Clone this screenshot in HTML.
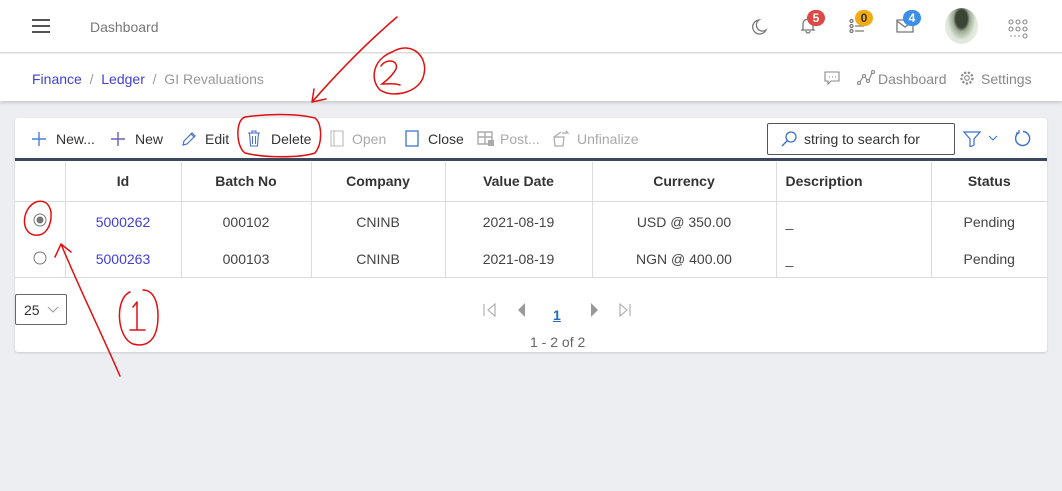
<!DOCTYPE html>
<html><head><meta charset="utf-8"><style>
*{box-sizing:border-box;margin:0;padding:0}
body{width:1062px;height:491px;background:#eceef1;font-family:"Liberation Sans",sans-serif;position:relative;overflow:hidden;color:#333}
.abs{position:absolute}
.hdr{left:0;top:0;width:1062px;height:53px;background:#fff;border-bottom:1px solid #dcdcdc}
.bc{left:0;top:54px;width:1062px;height:47px;background:#fff;box-shadow:0 2px 3px rgba(0,0,0,.15)}
.card{left:15px;top:118px;width:1032px;height:234px;background:#fff;border-radius:3px;box-shadow:0 1px 2px rgba(0,0,0,.15)}
.t{font-size:14px;white-space:nowrap}
.badge{position:absolute;height:16px;min-width:18px;border-radius:8px;color:#fff;font-size:12px;font-weight:bold;text-align:center;line-height:16px;padding:0 4px}
table{position:absolute;left:15px;top:162px;border-collapse:collapse;font-size:14px}
td,th{border-right:1px solid #dcdcdc;text-align:center;color:#444}
th{height:39px;border-bottom:1px solid #dcdcdc;color:#333}
td:last-child,th:last-child{border-right:none}
tr.r td{height:38px;padding-top:3px}
.lnk{color:#3f3fd8}
</style></head><body>
<div class="abs hdr"></div>
<svg class="abs" style="left:31px;top:18px" width="20" height="16"><path d="M1 2h18M1 8h18M1 14h18" stroke="#555" stroke-width="2"/></svg>
<div class="abs t" style="left:90px;top:19px;color:#777">Dashboard</div>
<svg class="abs" style="left:750px;top:18px" width="18" height="18"><path d="M9 2a7 7 0 1 0 7 10a6 6 0 0 1-7-10z" fill="none" stroke="#777" stroke-width="1.3"/></svg>
<svg class="abs" style="left:800px;top:16px" width="16" height="18"><path d="M3 13V8a5 5 0 0 1 10 0v5l1 1H2zM6 15a2 2 0 0 0 4 0" fill="none" stroke="#777" stroke-width="1.3"/></svg>
<div class="badge" style="left:807px;top:10px;background:#e04848">5</div>
<svg class="abs" style="left:849px;top:18px" width="16" height="16"><g fill="none" stroke="#777" stroke-width="1.3"><circle cx="2.5" cy="3" r="1.5"/><circle cx="2.5" cy="8" r="1.5"/><circle cx="2.5" cy="13" r="1.5"/><path d="M6 8h9M6 13h9"/></g></svg>
<div class="badge" style="left:855px;top:10px;background:#f2ac13;color:#333">0</div>
<svg class="abs" style="left:896px;top:19px" width="18" height="14"><path d="M1 1h16v12H1zM1 2l8 6 8-6" fill="none" stroke="#777" stroke-width="1.3"/></svg>
<div class="badge" style="left:903px;top:10px;background:#3b8fe8">4</div>
<div class="abs" style="left:945px;top:8px;width:33px;height:36px;border-radius:50%;background:radial-gradient(ellipse at 50% 30%,#3a4536 0 25%,#9aa893 35%,#dfe7da 60%,#eef2ec 100%)"></div>
<svg class="abs" style="left:1008px;top:19px" width="20" height="20"><g fill="none" stroke="#888" stroke-width="1.1"><circle cx="3" cy="3" r="2"/><circle cx="10" cy="3" r="2"/><circle cx="17" cy="3" r="2"/><circle cx="3" cy="10" r="2"/><circle cx="10" cy="10" r="2"/><circle cx="17" cy="10" r="2"/><circle cx="17" cy="17" r="2"/></g><g fill="#888"><circle cx="3" cy="17" r=".8"/><circle cx="7" cy="17" r=".8"/><circle cx="11" cy="17" r=".8"/></g></svg>

<div class="abs bc"></div>
<div class="abs t" style="left:32px;top:71px;color:#999"><span class="lnk">Finance</span> &nbsp;/&nbsp; <span class="lnk">Ledger</span> &nbsp;/&nbsp; GI Revaluations</div>
<svg class="abs" style="left:824px;top:70px" width="16" height="16"><path d="M1 2h14v9H7l-3 3v-3H1z" fill="none" stroke="#888" stroke-width="1.1"/><path d="M5 7h1M8 7h1M11 7h1" stroke="#888"/></svg>
<svg class="abs" style="left:857px;top:70px" width="18" height="16"><g fill="none" stroke="#888" stroke-width="1.1"><circle cx="2" cy="13" r="1.5"/><circle cx="7" cy="6" r="1.5"/><circle cx="11" cy="11" r="1.5"/><circle cx="16" cy="2" r="1.5"/><path d="M3 12l3-5M8 7l2 3M12 10l3-7"/></g></svg>
<div class="abs t" style="left:878px;top:71px;color:#888">Dashboard</div>
<svg class="abs" style="left:959px;top:70px" width="16" height="16"><circle cx="8" cy="8" r="5.5" fill="none" stroke="#888" stroke-width="2.2" stroke-dasharray="2.2 1.6"/><circle cx="8" cy="8" r="2.3" fill="none" stroke="#888" stroke-width="1.1"/></svg>
<div class="abs t" style="left:981px;top:71px;color:#888">Settings</div>

<div class="abs card"></div>
<div class="abs" style="left:15px;top:158px;width:1032px;height:3px;background:#3b475c"></div>
<svg class="abs" style="left:31px;top:131px" width="16" height="16"><path d="M8 1v14M1 8h14" stroke="#4a7fd0" stroke-width="1.4"/></svg>
<div class="abs t" style="left:56px;top:131px">New...</div>
<svg class="abs" style="left:110px;top:131px" width="16" height="16"><path d="M8 1v14M1 8h14" stroke="#6b5fb5" stroke-width="1.4"/></svg>
<div class="abs t" style="left:135px;top:131px">New</div>
<svg class="abs" style="left:181px;top:131px" width="16" height="16"><path d="M2 14l1-4 8-8 3 3-8 8zM10 3l3 3" fill="none" stroke="#4a70c8" stroke-width="1.2"/></svg>
<div class="abs t" style="left:205px;top:131px">Edit</div>
<svg class="abs" style="left:247px;top:130px" width="14" height="17"><path d="M1 3h12M5 3V1h4v2M2.5 3l1 13h7l1-13M5.5 6v8M8.5 6v8" fill="none" stroke="#4a70c8" stroke-width="1.1"/></svg>
<div class="abs t" style="left:271px;top:131px">Delete</div>
<svg class="abs" style="left:330px;top:130px" width="14" height="17"><path d="M1 1h12v15H1zM4 1v15" fill="none" stroke="#bbb" stroke-width="1.1"/></svg>
<div class="abs t" style="left:352px;top:131px;color:#aaa">Open</div>
<svg class="abs" style="left:405px;top:130px" width="14" height="17"><path d="M1 1h12v15H1z" fill="none" stroke="#3a6fd0" stroke-width="1.3"/></svg>
<div class="abs t" style="left:428px;top:131px">Close</div>
<svg class="abs" style="left:477px;top:131px" width="18" height="16"><path d="M1 1h14v12H1zM1 6h14M8 1v12" fill="none" stroke="#aaa" stroke-width="1.4"/><rect x="11" y="9" width="6" height="6" fill="#aaa"/></svg>
<div class="abs t" style="left:500px;top:131px;color:#aaa">Post...</div>
<svg class="abs" style="left:552px;top:130px" width="20" height="17"><path d="M2 7h10l-1 9H3zM2 7l7-5M10 3h6l-2-2" fill="none" stroke="#aaa" stroke-width="1.2"/></svg>
<div class="abs t" style="left:577px;top:131px;color:#aaa">Unfinalize</div>
<div class="abs" style="left:767px;top:123px;width:188px;height:32px;border:1px solid #555;border-radius:2px"></div>
<svg class="abs" style="left:780px;top:130px" width="18" height="18"><circle cx="11" cy="7" r="5" fill="none" stroke="#3a6fd0" stroke-width="1.3"/><path d="M7.5 10.5L2 16" stroke="#3a6fd0" stroke-width="1.4"/></svg>
<div class="abs t" style="left:804px;top:131px;color:#333">string to search for</div>
<svg class="abs" style="left:963px;top:131px" width="40" height="16"><path d="M1 1h16l-6 7v6l-4 2V8z" fill="none" stroke="#3a6fd0" stroke-width="1.2"/><path d="M26 5l4 4 4-4" fill="none" stroke="#3a6fd0" stroke-width="1.1"/></svg>
<svg class="abs" style="left:1013px;top:129px" width="20" height="20"><path d="M6 3.5A7 7 0 1 0 10 2.5" fill="none" stroke="#3a6fd0" stroke-width="1.4"/><path d="M6 1v3h-3" fill="none" stroke="#3a6fd0" stroke-width="1.2"/></svg>

<table>
<tr><th style="width:50px"></th><th style="width:116px">Id</th><th style="width:130px">Batch No</th><th style="width:134px">Company</th><th style="width:147px">Value Date</th><th style="width:184px">Currency</th><th style="width:155px;text-align:left;padding-left:9px">Description</th><th style="width:116px">Status</th></tr>
<tr class="r"><td><svg width="14" height="14"><circle cx="7" cy="7" r="6" fill="#fff" stroke="#777"/><circle cx="7" cy="7" r="3.5" fill="#777"/></svg></td><td class="lnk">5000262</td><td>000102</td><td>CNINB</td><td>2021-08-19</td><td>USD @ 350.00</td><td style="text-align:left;padding-left:9px">_</td><td>Pending</td></tr>
<tr class="r" style="border-bottom:1px solid #dcdcdc"><td><svg width="14" height="14"><circle cx="7" cy="7" r="6" fill="#fff" stroke="#777"/></svg></td><td class="lnk">5000263</td><td>000103</td><td>CNINB</td><td>2021-08-19</td><td>NGN @ 400.00</td><td style="text-align:left;padding-left:9px">_</td><td>Pending</td></tr>
</table>

<div class="abs" style="left:15px;top:294px;width:52px;height:31px;border:1px solid #666;border-radius:2px"></div>
<div class="abs t" style="left:24px;top:302px">25</div>
<svg class="abs" style="left:47px;top:306px" width="12" height="8"><path d="M1 1l5 5 5-5" fill="none" stroke="#999"/></svg>
<svg class="abs" style="left:483px;top:302px" width="150" height="16"><path d="M1 2v12M12 2L5 8l7 6z" fill="none" stroke="#aaa" stroke-width="1.1"/><path d="M42 1L35 8l7 7z" fill="#999"/><path d="M108 1l7 7-7 7z" fill="#999"/><path d="M137 2l7 6-7 6zM147 2v12" fill="none" stroke="#aaa" stroke-width="1.1"/></svg>
<div class="abs t" style="left:553px;top:307px;color:#1a6fc0;font-weight:bold;text-decoration:underline">1</div>
<div class="abs t" style="left:530px;top:334px;color:#666">1 - 2 of 2</div>

<svg class="abs" style="left:0;top:0" width="1062" height="491"><g fill="none" stroke="#e01010" stroke-width="1.5" stroke-linecap="round">
<path d="M397 17C370 40 340 70 312 102M312 102l14-3M312 102l2-13"/>
<path d="M392 52c20-12 36 5 32 22c-3 18-30 25-44 16c-10-10-8-30 12-38M381 66c5-8 18-6 15 3c-3 6-10 12-14 15c6 0 12-1 18 1"/>
<path d="M245 117c-10 3-9 30 0 36c20 5 55 5 70 0c8-10 7-30 0-35c-20-5-50-4-70-1z"/>
<path d="M36 202c-14 6-16 30-2 33c12 2 18-10 17-23c-2-10-8-12-15-10"/>
<path d="M120 376C100 330 80 290 61 244M61 244l-6 13M61 244l10 8"/>
<path d="M130 292c-15 6-14 45 3 52c15 4 25-5 25-28c0-15-5-26-15-26M137 302v28M130 330h15M137 302l-4 5"/>
</g></svg>
</body></html>
